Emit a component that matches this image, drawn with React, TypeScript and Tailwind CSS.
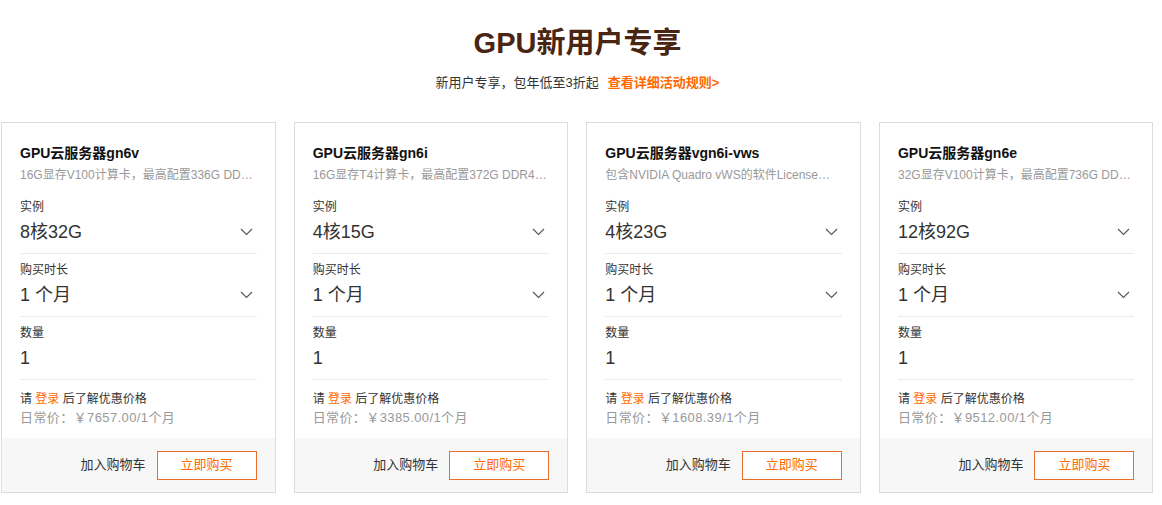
import React from "react";

const cards = [
  {
    title: "GPU云服务器gn6v",
    desc: "16G显存V100计算卡，最高配置336G DDR4内存，最高可达8颗V100 GPU",
    inst: "8核32G",
    price: "7657.00",
  },
  {
    title: "GPU云服务器gn6i",
    desc: "16G显存T4计算卡，最高配置372G DDR4内存，最高可达4颗T4 GPU",
    inst: "4核15G",
    price: "3385.00",
  },
  {
    title: "GPU云服务器vgn6i-vws",
    desc: "包含NVIDIA Quadro vWS的软件License，支持图形渲染",
    inst: "4核23G",
    price: "1608.39",
  },
  {
    title: "GPU云服务器gn6e",
    desc: "32G显存V100计算卡，最高配置736G DDR4内存，最高可达8颗V100 GPU",
    inst: "12核92G",
    price: "9512.00",
  },
];

function Chevron() {
  return (
    <svg width="13" height="8" viewBox="0 0 13 8" className="mr-[4px]">
      <path d="M1 1 L6.5 6.5 L12 1" fill="none" stroke="#555" strokeWidth="1.1" />
    </svg>
  );
}

function Row({ label, value, chevron }: { label: string; value: string; chevron?: boolean }) {
  return (
    <div className="border-b border-[#ebebeb] pt-[7px] pb-[9px]">
      <div className="h-[18px] text-[12px] leading-[18px] text-[#333]">{label}</div>
      <div className="mt-[4px] flex h-[24px] items-center justify-between">
        <span className="text-[18px] leading-[24px] text-[#333]">{value}</span>
        {chevron && <Chevron />}
      </div>
    </div>
  );
}

function Card({ c }: { c: (typeof cards)[number] }) {
  return (
    <div className="flex w-[274.5px] shrink-0 flex-col border border-[#dcdcdc] bg-white">
      <div className="px-[18px] pt-[20px]">
        <div className="h-[20px] text-[14px] font-bold leading-[20px] text-[#111]">{c.title}</div>
        <div className="mt-[3px] mb-[7px] h-[18px] truncate text-[12px] leading-[18px] text-[#999]">{c.desc}</div>
        <Row label="实例" value={c.inst} chevron />
        <Row label="购买时长" value="1 个月" chevron />
        <Row label="数量" value="1" />
        <div className="pt-[10px] pb-[11px]">
          <div className="h-[18px] text-[12px] leading-[18px] text-[#333]">
            请 <span className="text-[#ff6a00]">登录</span> 后了解优惠价格
          </div>
          <div className="h-[19px] text-[13px] leading-[19px] tracking-[0.4px] text-[#999]">
            日常价：￥{c.price}/1个月
          </div>
        </div>
      </div>
      <div className="flex h-[54px] items-center justify-end gap-[11px] bg-[#f7f7f7] px-[18px]">
        <span className="text-[13px] text-[#333]">加入购物车</span>
        <button className="h-[29px] w-[100px] border border-[#ea6f2c] bg-white text-[13px] text-[#ff6a00]">
          立即购买
        </button>
      </div>
    </div>
  );
}

export default function App() {
  return (
    <div
      className="h-[505px] w-[1162px] overflow-hidden bg-white"
      style={{ fontFamily: '"Liberation Sans", "Noto Sans CJK SC", sans-serif' }}
    >
      <div className="flex flex-col items-center pt-[23px] pr-[7px]">
        <h1 className="h-[40px] text-[29px] font-bold leading-[40px] text-[#4a2511]">GPU新用户专享</h1>
        <div className="mt-[10px] flex h-[20px] items-center gap-[9px] text-[13px] leading-[20px]">
          <span className="text-[#333]">新用户专享，包年低至3折起</span>
          <span className="font-bold text-[#ff6a00]">查看详细活动规则&gt;</span>
        </div>
      </div>
      <div className="mt-[29px] flex gap-[18.17px] pl-[1px]">
        {cards.map((c) => (
          <Card key={c.title} c={c} />
        ))}
      </div>
    </div>
  );
}
